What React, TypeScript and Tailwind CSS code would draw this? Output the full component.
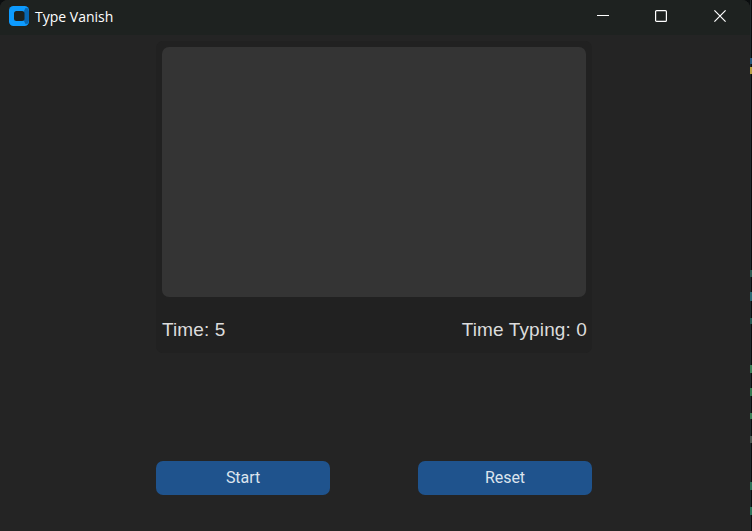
import React from "react";

const edgeMarks = [
  { gap: 58, height: 6, color: "#27587c" },
  { gap: 3, height: 7, color: "#b8a043" },
  { gap: 196, height: 7, color: "#2c5a51" },
  { gap: 15, height: 9, color: "#2a6a73" },
  { gap: 17, height: 6, color: "#245951" },
  { gap: 41, height: 8, color: "#3a8058" },
  { gap: 15, height: 8, color: "#35774f" },
  { gap: 17, height: 6, color: "#3a8058" },
  { gap: 17, height: 7, color: "#4a5750" },
  { gap: 39, height: 8, color: "#2d7158" },
  { gap: 17, height: 8, color: "#2d7158" },
];

function AppIcon() {
  return (
    <svg className="ml-[9px] shrink-0" width="20" height="20" viewBox="0 0 20 20">
      <rect width="20" height="20" rx="4.5" fill="#0d9bff" />
      <path d="M16.5 2L18.7 2.2L20 5V15L18.7 17.8L16.5 18L15 15V5Z" fill="#0867b4" />
      <rect x="5" y="5" width="10.5" height="10" rx="2.5" fill="#1c211f" />
    </svg>
  );
}

function TitleBar() {
  return (
    <header className="flex h-[35px] shrink-0 items-start bg-[#1e2220]">
      <div className="flex h-[32px] flex-1 items-center">
        <AppIcon />
        <h1 className="ml-[6px] mt-[2px] whitespace-nowrap font-['Open_Sans',sans-serif] text-[14px] leading-5 tracking-[0px] text-white">
          Type Vanish
        </h1>
      </div>
      <div className="flex h-[32px] items-center pr-[24px] text-white">
        <svg className="mr-[46px]" width="12" height="12" viewBox="0 0 12 12" fill="none" stroke="currentColor">
          <path d="M0 5.5H12" />
        </svg>
        <svg className="mr-[47px]" width="12" height="12" viewBox="0 0 12 12" fill="none" stroke="currentColor" strokeWidth="1.2">
          <rect x="0.6" y="0.6" width="10.8" height="10.8" rx="1" />
        </svg>
        <svg width="12" height="12" viewBox="0 0 12 12" fill="none" stroke="currentColor" strokeWidth="1.2">
          <path d="M0.4 0.4L11.6 11.6M11.6 0.4L0.4 11.6" />
        </svg>
      </div>
    </header>
  );
}

function ActionButton({ label }: { label: string }) {
  return (
    <button className="h-[34px] w-[174px] rounded-[7px] bg-[#1f538d] font-[Roboto,sans-serif] text-base leading-none tracking-[-0.05px] text-[#dce4ee]">
      {label}
    </button>
  );
}

export default function App() {
  return (
    <div className="flex h-[531px] w-[752px] overflow-hidden bg-[#0b0e0f]">
      <div className="flex w-[750px] shrink-0 flex-col overflow-hidden rounded-t-[8px] bg-[#242424]">
        <TitleBar />
        <main className="ml-[156px] mt-[6px] flex w-[436px] flex-col">
          <section className="h-[312px] rounded-[7px] bg-[#212121] px-[6px] pt-[6px]">
            <textarea
              aria-label="Typing area"
              className="block h-[250px] w-[424px] resize-none rounded-[7px] bg-[#343434] p-2 text-[#dce4ee] outline-none"
            />
            <div className="mr-[-1px] mt-[21px] flex justify-between font-['Liberation_Sans',Arial,sans-serif] text-[19px] leading-6 tracking-[0.12px] text-[#dcdcdc]">
              <span>Time: 5</span>
              <span>Time Typing: 0</span>
            </div>
          </section>
          <div className="mt-[108px] flex justify-between">
            <ActionButton label="Start" />
            <ActionButton label="Reset" />
          </div>
        </main>
      </div>
      <div className="flex w-[2px] shrink-0 flex-col items-end border-l border-[#202c2e]">
        {edgeMarks.map((mark, i) => (
          <div
            key={i}
            className="ml-[-1px] w-[2px] shrink-0"
            style={{ height: mark.height, marginTop: mark.gap, backgroundColor: mark.color }}
          />
        ))}
      </div>
    </div>
  );
}
